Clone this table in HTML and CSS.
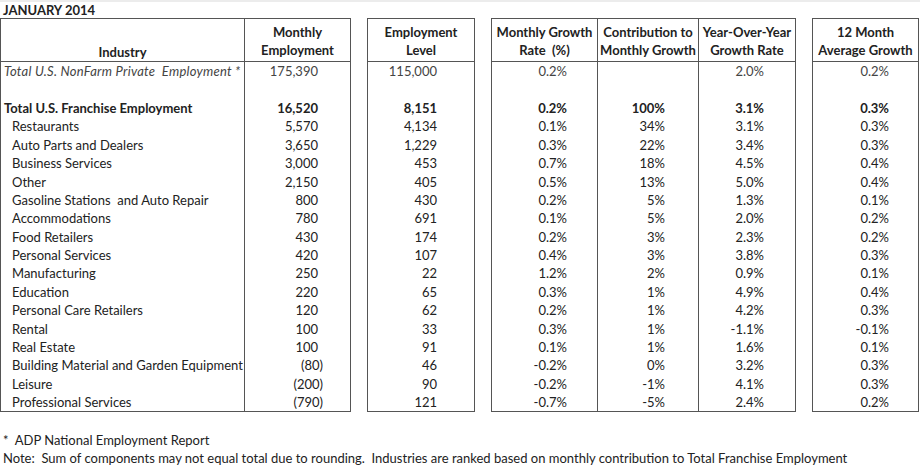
FILE: index.html
```html
<!DOCTYPE html>
<html lang="en">
<head>
  <meta charset="UTF-8" />
  <meta name="viewport" content="width=device-width, initial-scale=1.0" />
  <title>Franchise Employment - January 2014</title>
  <link rel="stylesheet" href="styles.css">
</head>
<body>
  <div class="titulo">JANUARY 2014</div>
  <table class="relatorio">
    <colgroup>
      <col class="c-ind" />
      <col class="c-mes" />
      <col class="c-vao" />
      <col class="c-nivel" />
      <col class="c-vao" />
      <col class="c-taxa" />
      <col class="c-contr" />
      <col class="c-anual" />
      <col class="c-vao" />
      <col class="c-media" />
    </colgroup>
    <thead>
      <tr>
        <th class="industria">Industry</th>
        <th class="caixa fim">Monthly<br>Employment</th>
        <th class="vao"></th>
        <th class="caixa fim">Employment<br>Level</th>
        <th class="vao"></th>
        <th class="caixa">Monthly Growth<br>Rate  (%)</th>
        <th class="caixa">Contribution to<br>Monthly Growth</th>
        <th class="caixa fim">Year-Over-Year<br>Growth Rate</th>
        <th class="vao"></th>
        <th class="caixa fim">12 Month<br>Average Growth</th>
      </tr>
    </thead>
    <tbody>
      <tr class="nacional">
        <td class="nome">Total U.S. NonFarm Private  Employment *</td>
        <td class="mes">175,390</td><td class="vao"></td>
        <td class="nivel">115,000</td><td class="vao"></td>
        <td class="taxa">0.2%</td>
        <td class="contr"></td>
        <td class="anual">2.0%</td><td class="vao"></td>
        <td class="media">0.2%</td>
      </tr>
      <tr>
        <td class="nome"></td>
        <td class="mes"></td><td class="vao"></td>
        <td class="nivel"></td><td class="vao"></td>
        <td class="taxa"></td>
        <td class="contr"></td>
        <td class="anual"></td><td class="vao"></td>
        <td class="media"></td>
      </tr>
      <tr class="total">
        <td class="nome">Total U.S. Franchise Employment</td>
        <td class="mes">16,520</td><td class="vao"></td>
        <td class="nivel">8,151</td><td class="vao"></td>
        <td class="taxa">0.2%</td>
        <td class="contr">100%</td>
        <td class="anual">3.1%</td><td class="vao"></td>
        <td class="media">0.3%</td>
      </tr>
      <tr>
        <td class="nome sub">Restaurants</td>
        <td class="mes">5,570</td><td class="vao"></td>
        <td class="nivel">4,134</td><td class="vao"></td>
        <td class="taxa">0.1%</td>
        <td class="contr">34%</td>
        <td class="anual">3.1%</td><td class="vao"></td>
        <td class="media">0.3%</td>
      </tr>
      <tr>
        <td class="nome sub">Auto Parts and Dealers</td>
        <td class="mes">3,650</td><td class="vao"></td>
        <td class="nivel">1,229</td><td class="vao"></td>
        <td class="taxa">0.3%</td>
        <td class="contr">22%</td>
        <td class="anual">3.4%</td><td class="vao"></td>
        <td class="media">0.3%</td>
      </tr>
      <tr>
        <td class="nome sub">Business Services</td>
        <td class="mes">3,000</td><td class="vao"></td>
        <td class="nivel">453</td><td class="vao"></td>
        <td class="taxa">0.7%</td>
        <td class="contr">18%</td>
        <td class="anual">4.5%</td><td class="vao"></td>
        <td class="media">0.4%</td>
      </tr>
      <tr>
        <td class="nome sub">Other</td>
        <td class="mes">2,150</td><td class="vao"></td>
        <td class="nivel">405</td><td class="vao"></td>
        <td class="taxa">0.5%</td>
        <td class="contr">13%</td>
        <td class="anual">5.0%</td><td class="vao"></td>
        <td class="media">0.4%</td>
      </tr>
      <tr>
        <td class="nome sub">Gasoline Stations  and Auto Repair</td>
        <td class="mes">800</td><td class="vao"></td>
        <td class="nivel">430</td><td class="vao"></td>
        <td class="taxa">0.2%</td>
        <td class="contr">5%</td>
        <td class="anual">1.3%</td><td class="vao"></td>
        <td class="media">0.1%</td>
      </tr>
      <tr>
        <td class="nome sub">Accommodations</td>
        <td class="mes">780</td><td class="vao"></td>
        <td class="nivel">691</td><td class="vao"></td>
        <td class="taxa">0.1%</td>
        <td class="contr">5%</td>
        <td class="anual">2.0%</td><td class="vao"></td>
        <td class="media">0.2%</td>
      </tr>
      <tr>
        <td class="nome sub">Food Retailers</td>
        <td class="mes">430</td><td class="vao"></td>
        <td class="nivel">174</td><td class="vao"></td>
        <td class="taxa">0.2%</td>
        <td class="contr">3%</td>
        <td class="anual">2.3%</td><td class="vao"></td>
        <td class="media">0.2%</td>
      </tr>
      <tr>
        <td class="nome sub">Personal Services</td>
        <td class="mes">420</td><td class="vao"></td>
        <td class="nivel">107</td><td class="vao"></td>
        <td class="taxa">0.4%</td>
        <td class="contr">3%</td>
        <td class="anual">3.8%</td><td class="vao"></td>
        <td class="media">0.3%</td>
      </tr>
      <tr>
        <td class="nome sub">Manufacturing</td>
        <td class="mes">250</td><td class="vao"></td>
        <td class="nivel">22</td><td class="vao"></td>
        <td class="taxa">1.2%</td>
        <td class="contr">2%</td>
        <td class="anual">0.9%</td><td class="vao"></td>
        <td class="media">0.1%</td>
      </tr>
      <tr>
        <td class="nome sub">Education</td>
        <td class="mes">220</td><td class="vao"></td>
        <td class="nivel">65</td><td class="vao"></td>
        <td class="taxa">0.3%</td>
        <td class="contr">1%</td>
        <td class="anual">4.9%</td><td class="vao"></td>
        <td class="media">0.4%</td>
      </tr>
      <tr>
        <td class="nome sub">Personal Care Retailers</td>
        <td class="mes">120</td><td class="vao"></td>
        <td class="nivel">62</td><td class="vao"></td>
        <td class="taxa">0.2%</td>
        <td class="contr">1%</td>
        <td class="anual">4.2%</td><td class="vao"></td>
        <td class="media">0.3%</td>
      </tr>
      <tr>
        <td class="nome sub">Rental</td>
        <td class="mes">100</td><td class="vao"></td>
        <td class="nivel">33</td><td class="vao"></td>
        <td class="taxa">0.3%</td>
        <td class="contr">1%</td>
        <td class="anual">-1.1%</td><td class="vao"></td>
        <td class="media">-0.1%</td>
      </tr>
      <tr>
        <td class="nome sub">Real Estate</td>
        <td class="mes">100</td><td class="vao"></td>
        <td class="nivel">91</td><td class="vao"></td>
        <td class="taxa">0.1%</td>
        <td class="contr">1%</td>
        <td class="anual">1.6%</td><td class="vao"></td>
        <td class="media">0.1%</td>
      </tr>
      <tr>
        <td class="nome sub">Building Material and Garden Equipment</td>
        <td class="mes"><span class="neg">(80)</span></td><td class="vao"></td>
        <td class="nivel">46</td><td class="vao"></td>
        <td class="taxa">-0.2%</td>
        <td class="contr">0%</td>
        <td class="anual">3.2%</td><td class="vao"></td>
        <td class="media">0.3%</td>
      </tr>
      <tr>
        <td class="nome sub">Leisure</td>
        <td class="mes"><span class="neg">(200)</span></td><td class="vao"></td>
        <td class="nivel">90</td><td class="vao"></td>
        <td class="taxa">-0.2%</td>
        <td class="contr">-1%</td>
        <td class="anual">4.1%</td><td class="vao"></td>
        <td class="media">0.3%</td>
      </tr>
      <tr class="ultima">
        <td class="nome sub">Professional Services</td>
        <td class="mes"><span class="neg">(790)</span></td><td class="vao"></td>
        <td class="nivel">121</td><td class="vao"></td>
        <td class="taxa">-0.7%</td>
        <td class="contr">-5%</td>
        <td class="anual">2.4%</td><td class="vao"></td>
        <td class="media">0.2%</td>
      </tr>
    </tbody>
  </table>
  <div class="notas">
    <p>*  ADP National Employment Report</p>
    <p>Note:  Sum of components may not equal total due to rounding.  Industries are ranked based on monthly contribution to Total Franchise Employment</p>
  </div>
</body>
</html>
```

FILE: styles.css
```css
body {
  margin: 0;
  font-family: Lato, "Open Sans", sans-serif;
  font-size: 13px;
  color: #222;
  background: #fff;
  border-top: 2px solid #ececec;
}
.titulo {
  font-weight: bold;
  padding-left: 3px;
  height: 16px;
  line-height: 16px;
}
.relatorio {
  border-collapse: collapse;
  table-layout: fixed;
  width: 918px;
}
.c-ind { width: 244px; }
.c-mes { width: 106px; }
.c-vao { width: 17px; }
.c-nivel { width: 107px; }
.c-taxa { width: 106px; }
.c-contr { width: 101px; }
.c-anual { width: 97px; }
.c-media { width: 106px; }

th, td {
  padding: 0;
  white-space: pre;
  border: 0 solid #555;
}
thead th {
  height: 40px;
  vertical-align: bottom;
  line-height: 18px;
  font-weight: bold;
  text-align: center;
  border-top-width: 1px;
  border-bottom-width: 1px;
  padding-bottom: 2px;
}
thead th.industria {
  border-left-width: 1px;
  padding-bottom: 0;
}
thead th.vao {
  border-top-width: 0;
  border-bottom-width: 0;
}
.caixa { border-left-width: 1px; }
.fim { border-right-width: 1px; }

tbody td {
  height: 18.4px;
  line-height: 18px;
  text-align: right;
}
td.nome {
  text-align: left;
  padding-left: 3px;
  border-left-width: 1px;
}
td.sub { padding-left: 11px; }
td.mes { padding-right: 32px; border-left-width: 1px; border-right-width: 1px; }
td.nivel { padding-right: 37px; border-left-width: 1px; border-right-width: 1px; }
td.taxa { padding-right: 30px; border-left-width: 1px; }
td.contr { padding-right: 33px; border-left-width: 1px; }
td.anual { padding-right: 31px; border-left-width: 1px; border-right-width: 1px; }
td.media { padding-right: 29px; border-left-width: 1px; border-right-width: 1px; }
.neg { margin-right: -5px; }

.nacional td { font-style: italic; color: #444; }
.nacional td.nome { letter-spacing: 0.25px; }
.nacional td.mes, .nacional td.nivel, .nacional td.taxa,
.nacional td.anual, .nacional td.media { font-style: normal; }
.total td { font-weight: bold; }
.ultima td { border-bottom-width: 1px; }
.ultima td.vao { border-bottom-width: 0; }

.notas {
  margin-top: 19px;
  padding-left: 3px;
}
.notas p {
  margin: 0;
  height: 18px;
  line-height: 18px;
  white-space: pre;
}
```
